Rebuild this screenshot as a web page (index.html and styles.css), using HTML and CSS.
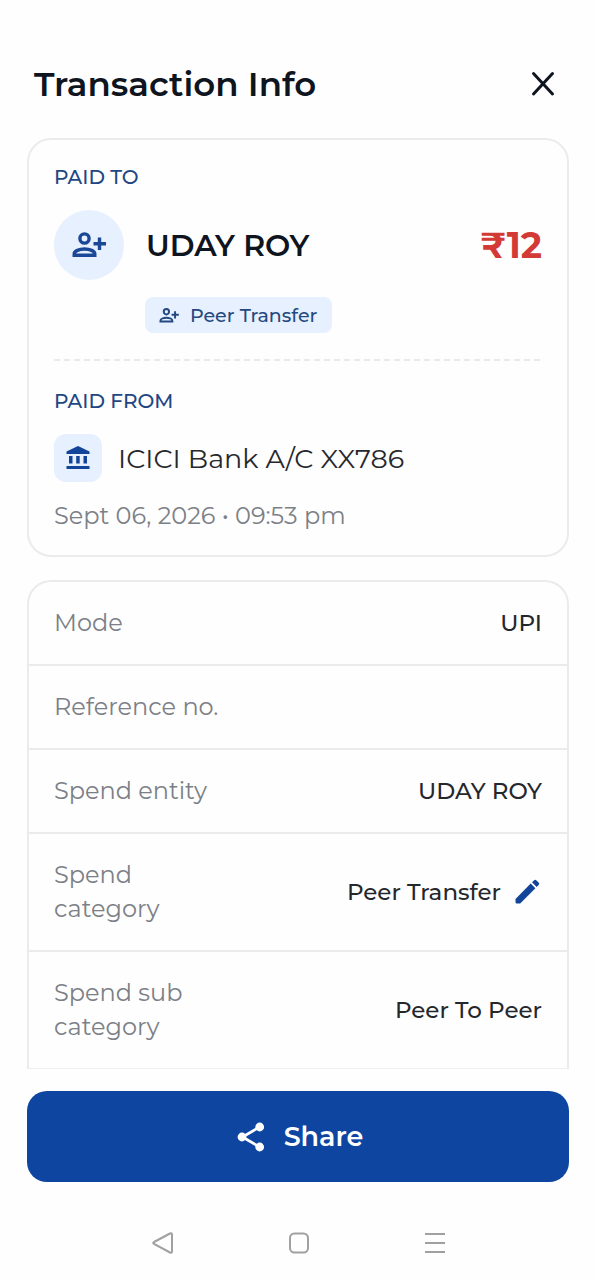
FILE: index.html
```html
<!DOCTYPE html>
<html lang="en">
<head>
<meta charset="utf-8">
<meta name="viewport" content="width=device-width, initial-scale=1">
<title>Transaction Info</title>
<link rel="stylesheet" href="styles.css">
</head>
<body>
<svg class="sprite" aria-hidden="true">
  <symbol id="person-add" viewBox="0 0 34 26">
    <g fill="none" stroke="currentColor" stroke-width="3.400">
      <circle cx="12.500" cy="6.500" r="4.600"/>
      <path d="M2.200 23.300v-1.300c0-3 5-5 10.300-5s10.300 2 10.300 5v1.300z"/>
      <path d="M27.500 5.500v12.500M21.500 11.800H34"/>
    </g>
  </symbol>
</svg>
<div class="screen">
  <header class="header">
    <h1 class="title">Transaction Info</h1>
    <button class="icon-button" type="button" aria-label="Close">
      <svg width="26" height="26" viewBox="0 0 26 26" fill="none" stroke="currentColor" stroke-width="3" stroke-linecap="round"><path d="M3.500 2.500l19 20.500M22.500 2.500l-19 20.500"/></svg>
    </button>
  </header>

  <main class="content">
    <section class="card summary">
      <h2 class="label">PAID TO</h2>
      <div class="payee">
        <span class="avatar"><svg width="34" height="26"><use href="#person-add"/></svg></span>
        <span class="payee-name">UDAY ROY</span>
        <span class="amount">₹12</span>
      </div>
      <span class="chip"><svg width="20" height="15"><use href="#person-add"/></svg>Peer Transfer</span>
      <svg class="divider" height="2" aria-hidden="true"><line x1="0" y1="1" x2="100%" y2="1" stroke="currentColor" stroke-width="2" stroke-dasharray="6 4"/></svg>
      <h2 class="label">PAID FROM</h2>
      <div class="account">
        <span class="bank">
          <svg width="24" height="24" viewBox="0 0 24 24" fill="currentColor"><path d="M12 0L.500 5.500v2.500h23V5.500zM3 10h3.500v7.500H3zM10.200 10h3.500v7.500h-3.500zM17.500 10H21v7.500h-3.500zM.500 20h23v3H.500z"/></svg>
        </span>
        <span>ICICI Bank A/C XX786</span>
      </div>
      <p class="date">Sept 06, 2026 • 09:53 pm</p>
    </section>

    <dl class="card details">
      <div class="row"><dt>Mode</dt><dd>UPI</dd></div>
      <div class="row"><dt>Reference no.</dt><dd></dd></div>
      <div class="row"><dt>Spend entity</dt><dd>UDAY ROY</dd></div>
      <div class="row"><dt>Spend category</dt><dd>Peer Transfer
        <button class="icon-button edit" type="button" aria-label="Edit spend category">
          <svg width="26" height="26" viewBox="0 0 26 26" fill="currentColor"><path d="M1.500 20L16.700 4.600l4.700 4.700L6.200 24.500H3Q1.500 24.500 1.500 23zM18 3.300l1.900-1.900q1.300-1.300 2.600 0l2.100 2.100q1.300 1.300 0 2.600L22.700 8z"/></svg>
        </button></dd></div>
      <div class="row"><dt>Spend sub category</dt><dd>Peer To Peer</dd></div>
    </dl>
  </main>

  <footer class="actions">
    <button class="share" type="button">
      <svg width="28" height="30" viewBox="0 0 28 30"><path d="M22.500 5L5.500 15l17 10" fill="none" stroke="currentColor" stroke-width="2.800"/><g fill="currentColor"><circle cx="22.700" cy="5" r="4.400"/><circle cx="5" cy="15" r="4.400"/><circle cx="22.700" cy="25" r="4.400"/></g></svg>
      Share
    </button>
  </footer>

  <nav class="system-nav" aria-label="System">
    <button class="icon-button" type="button" aria-label="Back"><svg width="22" height="22" viewBox="0 0 22 22"><path d="M2 10L18 1.500q2-.800 2 1v17q0 1.800-2 1L2 12q-1.500-1 0-2z"/></svg></button>
    <button class="icon-button" type="button" aria-label="Home"><svg width="22" height="22" viewBox="0 0 22 22"><rect x="2" y="1.500" width="18" height="19" rx="4.500"/></svg></button>
    <button class="icon-button" type="button" aria-label="Recent apps"><svg width="22" height="22" viewBox="0 0 22 22"><path d="M1 2h20M1 11h20M1 20h20"/></svg></button>
  </nav>
</div>
</body>
</html>
```
FILE: styles.css
```css
* { box-sizing: border-box; }

body {
  margin: 0;
  background: #fefefe;
  color: #0e1420;
  font-family: Montserrat, Inter, sans-serif;
}

h1, h2, p, dl, dd { margin: 0; }
svg { display: block; flex: none; }
.sprite { position: absolute; width: 0; height: 0; }

.screen {
  display: flex;
  flex-direction: column;
  min-height: 100vh;
  padding-top: 60px;
}

.header {
  display: flex;
  align-items: center;
  justify-content: space-between;
  padding: 0 39px 30px 34px;
}

.title {
  font-size: 34px;
  font-weight: 600;
  line-height: 48px;
}

.icon-button {
  display: grid;
  place-items: center;
  padding: 0;
  border: 0;
  background: none;
  color: inherit;
}

.content {
  display: flex;
  flex-direction: column;
  gap: 23px;
  padding: 0 26px 0 27px;
}

.card {
  border: 2px solid #ebebed;
  border-radius: 24px;
}

.summary { padding: 25px 25px 23px; }

.label {
  color: #1e4784;
  font-size: 20px;
  font-weight: 500;
  line-height: 24px;
  margin-bottom: 21px;
}

.payee {
  display: flex;
  align-items: center;
  gap: 22px;
}

.avatar {
  display: grid;
  place-items: center;
  width: 70px;
  height: 70px;
  border-radius: 50%;
  background: #e6f0fe;
  color: #1a4896;
}

.payee-name {
  flex: 1;
  font-size: 30px;
  font-weight: 600;
}

.amount {
  color: #d43a35;
  font-size: 36px;
  font-weight: 700;
}

.chip {
  display: flex;
  align-items: center;
  gap: 11px;
  width: fit-content;
  height: 36px;
  margin: 17px 0 26px 91px;
  padding: 0 15px 0 14px;
  border-radius: 8px;
  background: #e6f0fe;
  color: #24497e;
  font-size: 19px;
  font-weight: 500;
}

.divider {
  width: 100%;
  margin-bottom: 28px;
  color: #e8e9ea;
}

.account {
  display: flex;
  align-items: center;
  gap: 16px;
  color: #26282c;
  font-size: 27px;
}

.bank {
  display: grid;
  place-items: center;
  width: 48px;
  height: 48px;
  border-radius: 12px;
  background: #e6f0fe;
  color: #12459a;
}

.date {
  margin-top: 18px;
  color: #7c8086;
  font-size: 24px;
  line-height: 32px;
}

.details {
  border-bottom: 0;
  border-radius: 24px 24px 0 0;
}

.row {
  display: flex;
  align-items: center;
  justify-content: space-between;
  padding: 24px 25px;
  border-bottom: 2px solid #ebebed;
  font-size: 24px;
  line-height: 34px;
}

.row:last-child { border-bottom: 1px solid #f0f0f1; }

dt {
  max-width: 35%;
  color: #7c8086;
}

dd {
  display: flex;
  align-items: center;
  gap: 13px;
  color: #24272c;
  font-size: 23px;
  font-weight: 500;
}

.edit {
  margin-right: 2px;
  color: #12459a;
}

.actions { padding: 22px 26px 0 27px; }

.share {
  display: flex;
  align-items: center;
  justify-content: center;
  gap: 19px;
  width: 100%;
  padding: 28px 28px 28px 32px;
  border: 0;
  border-radius: 20px;
  background: #0d45a0;
  color: #fff;
  font: inherit;
  font-size: 27px;
  font-weight: 600;
  line-height: 35px;
}

.system-nav {
  display: grid;
  grid-template-columns: repeat(3, 1fr);
  margin-top: auto;
  padding: 0 15.5% 26px 16%;
  fill: none;
  stroke: #a0a0a0;
  stroke-width: 2;
}
```
